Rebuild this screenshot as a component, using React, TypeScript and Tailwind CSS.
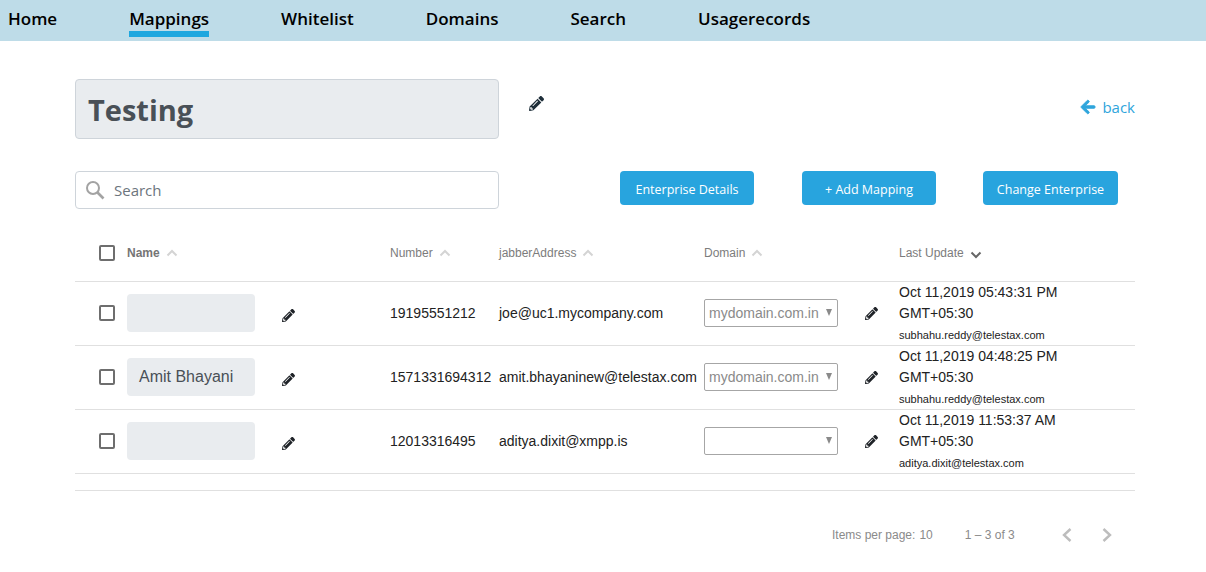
import React from 'react';
import { FaArrowLeft, FaPencilAlt } from 'react-icons/fa';

const navItems = ['Home', 'Mappings', 'Whitelist', 'Domains', 'Search', 'Usagerecords'];

const rows = [
  { name: '', number: '19195551212', jabber: 'joe@uc1.mycompany.com', domain: 'mydomain.com.in', date: 'Oct 11,2019 05:43:31 PM', by: 'subhahu.reddy@telestax.com' },
  { name: 'Amit Bhayani', number: '1571331694312', jabber: 'amit.bhayaninew@telestax.com', domain: 'mydomain.com.in', date: 'Oct 11,2019 04:48:25 PM', by: 'subhahu.reddy@telestax.com' },
  { name: '', number: '12013316495', jabber: 'aditya.dixit@xmpp.is', domain: '', date: 'Oct 11,2019 11:53:37 AM', by: 'aditya.dixit@telestax.com' },
];

function Chevron({ down = false }: { down?: boolean }) {
  return (
    <svg width="12" height="8" viewBox="0 0 12 8" className={down ? 'mt-1' : ''} fill="none" stroke={down ? '#666666' : '#d4d4d4'} strokeWidth="2">
      <polyline points={down ? '1.5,1.5 6,6 10.5,1.5' : '1.5,6.5 6,2 10.5,6.5'} />
    </svg>
  );
}

function Checkbox() {
  return <div className="h-4 w-4 rounded-[2px] border-2 border-[#6e6e6e]" />;
}

function Header({ label, bold = false }: { label: string; bold?: boolean }) {
  return (
    <div className="flex items-center gap-[6px]">
      <span className={`text-xs ${bold ? 'font-bold text-[#757575]' : 'text-[#7c7c7c]'}`}>{label}</span>
      <Chevron />
    </div>
  );
}

function Row({ row }: { row: (typeof rows)[number] }) {
  return (
    <div className="grid h-16 grid-cols-[52px_263px_109px_205px_195px_236px] items-center border-b border-[#e0e0e0] text-sm text-[#222222]">
      <div className="mb-1 pl-6">
        <Checkbox />
      </div>
      <div className="mb-1 flex items-center">
        <div className="flex h-[38px] w-32 items-center rounded bg-[#e9ecef] px-3 text-base text-[#495057]">{row.name}</div>
        <FaPencilAlt className="mt-[6px] ml-[27px] text-[13px] text-[#1f2328]" />
      </div>
      <div className="mb-1">{row.number}</div>
      <div className="mb-1 whitespace-nowrap">{row.jabber}</div>
      <div className="mb-1 flex items-center">
        <div className="flex h-7 w-[134px] items-center justify-between rounded-[2px] border border-[#a6a6a6] pr-[5px] pl-1 text-[#8a8a8a]">
          <span>{row.domain}</span>
          <span className="h-0 w-0 border-x-[3.5px] border-t-[7px] border-x-transparent border-t-[#8a8a8a]" />
        </div>
        <FaPencilAlt className="mt-[2px] ml-[27px] text-[13px] text-[#1f2328]" />
      </div>
      <div className="leading-[21px]">
        <div>{row.date}</div>
        <div>GMT+05:30</div>
        <div className="text-[11px] leading-[23px]">{row.by}</div>
      </div>
    </div>
  );
}

export default function App() {
  return (
    <div className="min-h-[572px] bg-white font-['Liberation_Sans',sans-serif]">
      <nav className="flex h-[41px] gap-[72px] bg-[#bedce8] pl-2 font-['Open_Sans',sans-serif] text-[17px] font-semibold text-black">
        {navItems.map((item) => (
          <div key={item} className={`h-[37px] pt-[5px] leading-[27px] ${item === 'Mappings' ? 'border-b-[6px] border-[#1ea7df]' : ''}`}>
            {item}
          </div>
        ))}
      </nav>

      <main className="px-[71px] pl-[75px]">
        <div className="mt-[38px] flex items-start font-['Open_Sans',sans-serif]">
          <div className="flex h-[60px] w-[424px] items-center rounded border border-[#ced4da] bg-[#e9ecef] px-3 pt-[2px] text-[29px] font-bold text-[#495057]">
            Testing
          </div>
          <FaPencilAlt className="mt-[17px] ml-[30px] text-[15px] text-[#1f2f3a]" />
          <div className="mt-4 ml-auto flex items-center gap-[6px] text-[#2fa5dc]">
            <FaArrowLeft className="stroke-[30px] text-[16px]" />
            <span className="text-[15px] leading-[24px]">back</span>
          </div>
        </div>

        <div className="mt-8 flex items-start font-['Open_Sans',sans-serif]">
          <div className="flex h-[38px] w-[424px] items-center rounded border border-[#ced4da] pl-[9px]">
            <svg width="20" height="20" viewBox="0 0 20 20" fill="none" stroke="#a3a3a3" strokeWidth="2">
              <circle cx="8" cy="8" r="6" />
              <line x1="12.5" y1="12.5" x2="18.5" y2="18.5" strokeWidth="2.6" />
            </svg>
            <span className="ml-[9px] text-[15px] text-[#6c757d]">Search</span>
          </div>
          <div className="ml-[121px] flex text-[12.5px] text-white">
            <div className="flex h-[34px] w-[134px] items-center justify-center rounded bg-[#28a4de] pt-[5px]">Enterprise Details</div>
            <div className="ml-12 flex h-[34px] w-[134px] items-center justify-center rounded bg-[#28a4de] pt-[5px]">+ Add Mapping</div>
            <div className="ml-[47px] flex h-[34px] w-[135px] items-center justify-center rounded bg-[#28a4de] pt-[5px]">Change Enterprise</div>
          </div>
        </div>

        <div className="mt-4">
          <div className="grid h-[57px] grid-cols-[52px_263px_109px_205px_195px_236px] items-center border-b border-[#e0e0e0]">
            <div className="pl-6">
              <Checkbox />
            </div>
            <Header label="Name" bold />
            <Header label="Number" />
            <Header label="jabberAddress" />
            <Header label="Domain" />
            <div className="flex items-center gap-[6px]">
              <span className="text-xs text-[#7c7c7c]">Last Update</span>
              <Chevron down />
            </div>
          </div>
          {rows.map((row) => (
            <Row key={row.number} row={row} />
          ))}
          <div className="h-[17px] border-b border-[#e0e0e0]" />
        </div>

        <div className="mt-9 flex items-center text-xs text-[#8a8a8a]">
          <span className="ml-[757px]">Items per page:</span>
          <span className="ml-1">10</span>
          <span className="ml-8">1 – 3 of 3</span>
          <svg width="12" height="16" viewBox="0 0 12 16" fill="none" stroke="#bdbdbd" strokeWidth="2.4" className="ml-[46px]">
            <polyline points="9.5,2 3,8 9.5,14" />
          </svg>
          <svg width="12" height="16" viewBox="0 0 12 16" fill="none" stroke="#bdbdbd" strokeWidth="2.4" className="ml-7">
            <polyline points="2.5,2 9,8 2.5,14" />
          </svg>
        </div>
      </main>
    </div>
  );
}
